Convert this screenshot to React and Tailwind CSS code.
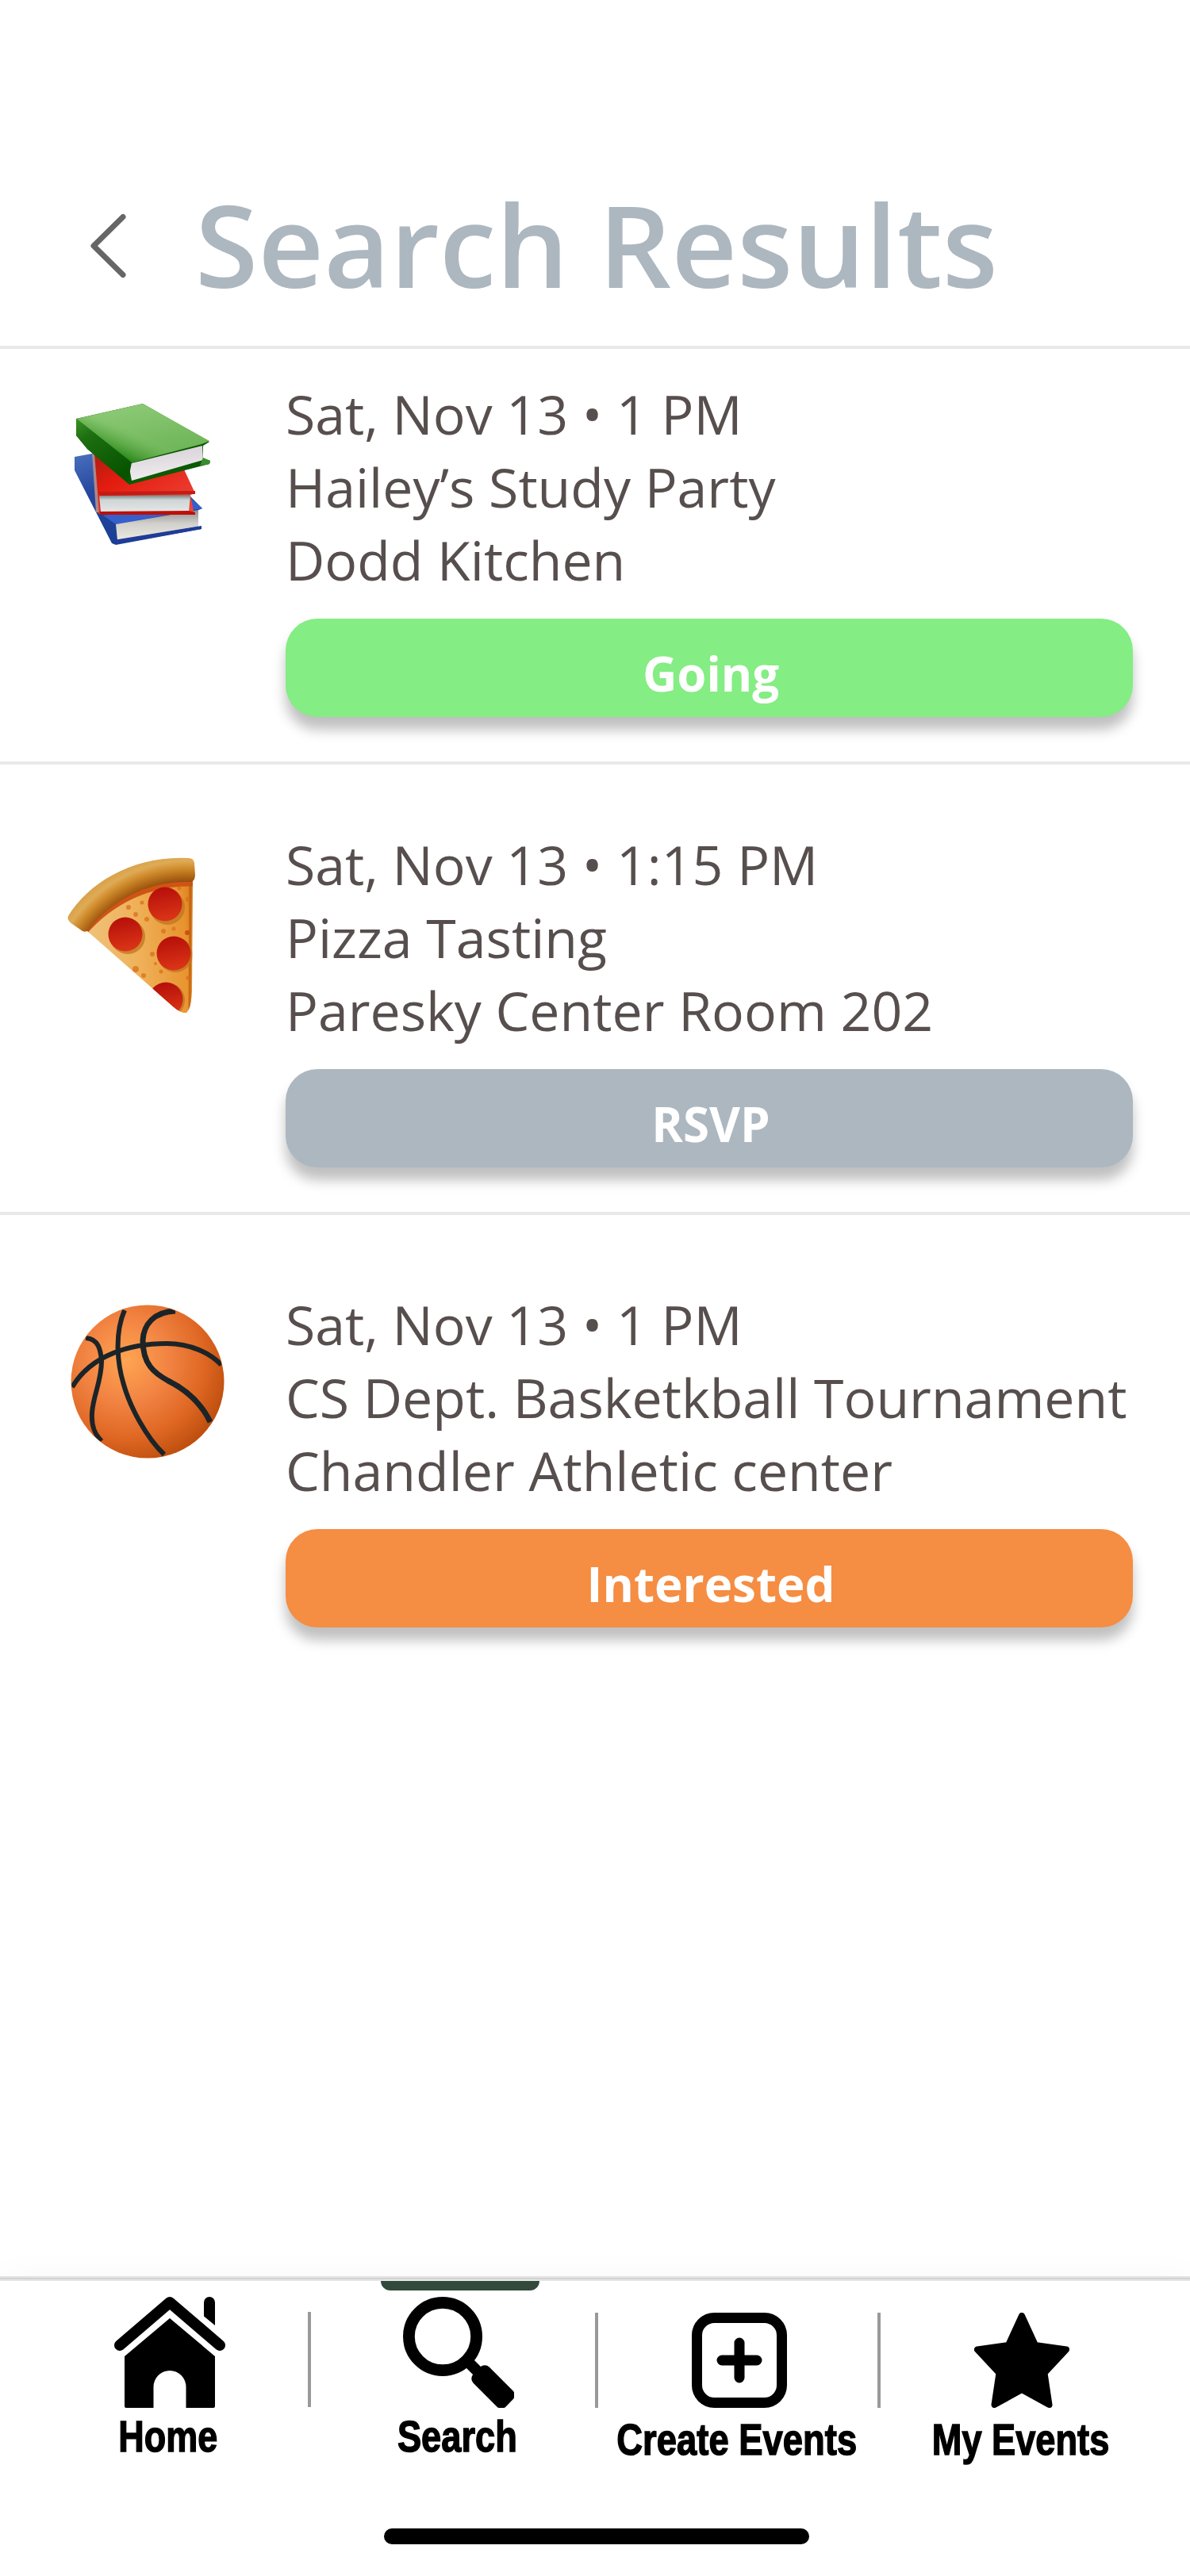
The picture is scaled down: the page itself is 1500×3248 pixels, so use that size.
const events = [
  {
    icon: 'books',
    when: 'Sat, Nov 13 • 1 PM',
    title: 'Hailey’s Study Party',
    place: 'Dodd Kitchen',
    status: 'Going',
    color: 'bg-[#84ed83]',
    row: 'h-[524px] pt-[36px]',
    divider: true,
  },
  {
    icon: 'pizza',
    when: 'Sat, Nov 13 • 1:15 PM',
    title: 'Pizza Tasting',
    place: 'Paresky Center Room 202',
    status: 'RSVP',
    color: 'bg-[#adb7bf]',
    row: 'h-[568px] pt-[80px]',
    divider: true,
  },
  {
    icon: 'ball',
    when: 'Sat, Nov 13 • 1 PM',
    title: 'CS Dept. Basketkball Tournament',
    place: 'Chandler Athletic center',
    status: 'Interested',
    color: 'bg-[#f58d42]',
    row: 'h-[568px] pt-[92px]',
    divider: false,
  },
];

function Books() {
  return (
    <svg viewBox="0 0 240 240" className="block size-[240px]">
      <defs>
        <linearGradient id="bkGreen" x1="0.2" y1="0" x2="0.7" y2="1">
          <stop offset="0" stopColor="#8fcc78" />
          <stop offset="1" stopColor="#69b153" />
        </linearGradient>
        <linearGradient id="bkSpine" x1="0" y1="0" x2="0.5" y2="1">
          <stop offset="0" stopColor="#3c9228" />
          <stop offset="0.3" stopColor="#1d6f10" />
          <stop offset="1" stopColor="#075400" />
        </linearGradient>
        <linearGradient id="bkTop" x1="0" y1="0.55" x2="0.35" y2="0.2">
          <stop offset="0" stopColor="#2c8a1c" />
          <stop offset="0.45" stopColor="#5faa48" stopOpacity="0.5" />
          <stop offset="0.8" stopColor="#8bc874" stopOpacity="0" />
        </linearGradient>
        <linearGradient id="bkRed" x1="0" y1="0" x2="1" y2="1">
          <stop offset="0" stopColor="#a81e14" />
          <stop offset="0.35" stopColor="#e31c0f" />
          <stop offset="1" stopColor="#ee4a3d" />
        </linearGradient>
        <linearGradient id="bkPage" x1="0" y1="0" x2="0.2" y2="1">
          <stop offset="0" stopColor="#d5ced6" />
          <stop offset="1" stopColor="#efedef" />
        </linearGradient>
        <linearGradient id="bkPage2" x1="0" y1="0" x2="0" y2="1">
          <stop offset="0" stopColor="#747c7c" />
          <stop offset="0.3" stopColor="#cfd4d4" />
          <stop offset="1" stopColor="#e2e6e6" />
        </linearGradient>
        <linearGradient id="bkPage3" x1="0" y1="0" x2="0" y2="1">
          <stop offset="0" stopColor="#8f8e8e" />
          <stop offset="0.45" stopColor="#d2d0cc" />
          <stop offset="1" stopColor="#ece9e1" />
        </linearGradient>
        <linearGradient id="bkBlue" x1="0" y1="0" x2="0.5" y2="1">
          <stop offset="0" stopColor="#4b70bf" />
          <stop offset="0.4" stopColor="#25469b" />
          <stop offset="1" stopColor="#193d94" />
        </linearGradient>
      </defs>
      <path d="M34 96 L56 92 L74 168 L180 146 L195 161 L188 164 L188 184 L194 187 L86 207 L81 205 L34 113 Z" fill="url(#bkBlue)" />
      <path d="M70 170 L180 148 L195 161 L86 181 Z" fill="#375fcc" />
      <path d="M86 181 L190 163 L190 184 L88 201 Z" fill="url(#bkPage3)" />
      <path d="M83 201 L194 183 L194 187 L86 206 Z" fill="#203c98" />
      <path d="M56 88 L172 112 L186 142 L180 144 L184 165 L186 168 L64 168 Z" fill="url(#bkRed)" />
      <path d="M56 91 L59 91 L65 166 L61 166 Z" fill="#a9888a" />
      <path d="M65 145 L180 144 L178 165 L67 165 Z" fill="url(#bkPage2)" />
      <path d="M64 140 L186 139 L186 143 L66 145 Z" fill="#c61b13" />
      <path d="M65 165 L178 164 L186 166 L186 169 L67 169 Z" fill="#bd0f08" />
      <path d="M36 48 L120 29 L204 77 L196 82 L196 98 L205 101 L204 105 L103 131 L50 86 L36 69 Z" fill="#0c5a04" />
      <path d="M102 105 L195 82 L196 100 L106 126 Z" fill="url(#bkPage)" />
      <path d="M196 97 L205 101 L204 105 L192 107 Z" fill="#3b8c2e" />
      <path d="M37 48 L120 29 L204 76 L194 80 L102 104 L42 62 Z" fill="url(#bkGreen)" />
      <path d="M37 48 L120 29 L204 76 L194 80 L102 104 L42 62 Z" fill="url(#bkTop)" />
      <path d="M36 48 L38 49 L106 103 L101 129 L50 86 L36 69 Z" fill="url(#bkSpine)" />
    </svg>
  );
}

function Pizza() {
  return (
    <svg viewBox="0 0 240 250" className="block h-[250px] w-[240px]">
      <defs>
        <linearGradient id="pzCheese" x1="0" y1="0.5" x2="1" y2="0.4">
          <stop offset="0" stopColor="#efc98a" />
          <stop offset="0.5" stopColor="#efb35c" />
          <stop offset="0.85" stopColor="#e8932f" />
          <stop offset="1" stopColor="#c9690f" />
        </linearGradient>
        <radialGradient id="pzCrust" gradientUnits="userSpaceOnUse" cx="178" cy="216" r="188">
          <stop offset="0.78" stopColor="#7d3305" />
          <stop offset="0.85" stopColor="#aa6214" />
          <stop offset="0.91" stopColor="#cf8a2b" />
          <stop offset="0.96" stopColor="#dfab55" />
          <stop offset="1" stopColor="#d9a34b" />
        </radialGradient>
        <linearGradient id="pzPep" x1="0.4" y1="0" x2="0.6" y2="1">
          <stop offset="0" stopColor="#b50f0a" />
          <stop offset="1" stopColor="#dc3618" />
        </linearGradient>
        <clipPath id="pzClip">
          <path d="M42 122 C75 84 130 58 183 60 L182 200 Q181 222 175 227 Q168 228 158 219 L133 197 L50 124 Z" />
        </clipPath>
      </defs>
      <g clipPath="url(#pzClip)">
        <rect x="20" y="40" width="180" height="200" fill="url(#pzCheese)" />
        <path d="M46 126 C80 86 130 62 184 64" fill="none" stroke="#cf5416" strokeWidth="7" />
        <path d="M180 60 L179 226" stroke="#b85a10" strokeWidth="3" opacity="0.7" />
        <g fill="#d9701d" opacity="0.75">
          <circle cx="102" cy="94" r="3" /><circle cx="111" cy="103" r="3" /><circle cx="125" cy="109" r="3" />
          <circle cx="119" cy="88" r="2.5" /><circle cx="146" cy="124" r="3" /><circle cx="159" cy="121" r="2.5" />
          <circle cx="176" cy="126" r="3" fill="#c33b10" /><circle cx="132" cy="153" r="3" /><circle cx="136" cy="165" r="2" />
          <circle cx="111" cy="172" r="4" /><circle cx="121" cy="180" r="3" /><circle cx="143" cy="175" r="2.5" />
          <circle cx="177" cy="84" r="3" /><circle cx="177" cy="183" r="2.5" /><circle cx="166" cy="70" r="2.5" />
        </g>
        <g fill="#c1741d" opacity="0.75">
          <circle cx="151" cy="94" r="22" /><circle cx="101" cy="131" r="22" />
          <circle cx="161" cy="154" r="22" /><circle cx="151" cy="211" r="22" />
        </g>
        <g fill="url(#pzPep)">
          <circle cx="148" cy="90" r="21.5" /><circle cx="98" cy="128" r="21.5" />
          <circle cx="159" cy="152" r="21.5" /><circle cx="149" cy="210" r="21.5" />
        </g>
      </g>
      <path d="M26 105 C52 62 110 28 178 32 Q184 32 185 38 L186 54 Q185 62 180 62 C126 60 80 86 52 122 Q49 126 44 124 L31 115 Q24 110 26 105 Z" fill="url(#pzCrust)" />
    </svg>
  );
}

function Ball() {
  return (
    <svg viewBox="0 0 250 240" className="block h-[240px] w-[250px]">
      <defs>
        <radialGradient id="blFill" cx="0.36" cy="0.36" r="0.68">
          <stop offset="0" stopColor="#ffa552" />
          <stop offset="0.4" stopColor="#f28443" />
          <stop offset="0.75" stopColor="#df6723" />
          <stop offset="1" stopColor="#c0500f" />
        </radialGradient>
        <clipPath id="blClip"><circle cx="126" cy="122" r="96" /></clipPath>
      </defs>
      <circle cx="126" cy="122" r="96.500" fill="url(#blFill)" />
      <g clipPath="url(#blClip)" fill="none" stroke="#1c2427" strokeWidth="6">
        <path d="M31 129 C55 88 105 74 150 74 C180 74 205 86 219 101" />
        <path d="M48 67 C64 68 67 82 68 96 C68 122 57 140 56 162 C55 178 59 188 68 197" />
        <path d="M97 32 C84 62 88 100 96 126 C104 154 124 192 147 214" />
        <path d="M161 33 C134 34 121 50 120 70 C120 100 134 111 152 121 C178 134 195 152 205 173" strokeWidth="7" />
      </g>
    </svg>
  );
}

function EventIcon({ name }) {
  if (name === 'books') return <div className="mt-[4px] ml-[60px]"><Books /></div>;
  if (name === 'pizza') return <div className="mt-[6px] ml-[60px]"><Pizza /></div>;
  return <div className="-mt-[4px] ml-[60px]"><Ball /></div>;
}

function EventRow({ event }) {
  return (
    <section className={`flex items-start ${event.row} ${event.divider ? 'border-b-4 border-[#e9e9e9]' : ''}`}>
      <div className="w-[360px] shrink-0">
        <EventIcon name={event.icon} />
      </div>
      <div className="w-[1068px] shrink-0">
        <div className="text-[68px] leading-[92px] whitespace-nowrap text-[#574f4d]">
          <p>{event.when}</p>
          <p>{event.title}</p>
          <p>{event.place}</p>
        </div>
        <button
          className={`mt-[28px] flex h-[124px] w-full justify-center rounded-[40px] pt-[28px] pl-[4px] text-[60px] leading-[82px] font-bold text-white shadow-[0_16px_16px_rgba(0,0,0,0.25)] ${event.color}`}
        >
          {event.status}
        </button>
      </div>
    </section>
  );
}

function HomeIcon() {
  return (
    <svg viewBox="0 0 140 140" className="block size-[140px]">
      <path d="M7 61 L70 7 L133 61" fill="none" stroke="#000" strokeWidth="14" strokeLinecap="round" strokeLinejoin="round" />
      <path d="M113 24.500 V7 a7 7 0 0 1 14 0 V36 Z" />
      <path d="M70 27 L127 75 V138 q0 2 -2 2 H90.500 V113.500 a20.500 20.500 0 0 0 -41 0 V140 H15 q-2 0 -2 -2 V75 Z" />
    </svg>
  );
}

function SearchIcon() {
  return (
    <svg viewBox="0 0 140 140" className="block size-[140px]">
      <circle cx="50" cy="50" r="42.600" fill="none" stroke="#000" strokeWidth="14.800" />
      <path d="M78 78 L98 98" stroke="#000" strokeWidth="14" />
      <rect x="84.500" y="99.300" width="58" height="28.400" rx="8" transform="rotate(45 113.500 113.500)" />
    </svg>
  );
}

function PlusIcon() {
  return (
    <svg viewBox="0 0 120 120" className="block size-[120px]">
      <rect x="6.500" y="6.500" width="107" height="107" rx="22" fill="none" stroke="#000" strokeWidth="13" />
      <path d="M60 38 V82 M38 60 H82" stroke="#000" strokeWidth="13" strokeLinecap="round" />
    </svg>
  );
}

function StarIcon() {
  return (
    <svg viewBox="0 0 120 120" className="block size-[120px]">
      <path d="M60 4 L77 41 L116 46.500 L88.500 76 L94.500 116 L60 97 L25.500 116 L31.500 76 L4 46.500 L43 41 Z" stroke="#000" strokeWidth="8" strokeLinejoin="round" />
    </svg>
  );
}

function NavItem({ label, box, text, children }) {
  return (
    <div className={`flex shrink-0 flex-col items-center ${box}`}>
      {children}
      <span className={`inline-block text-[56px] leading-[64px] font-bold whitespace-nowrap [font-family:'Liberation_Sans',Arial,sans-serif] [-webkit-text-stroke:1.5px_#000] ${text}`}>
        {label}
      </span>
    </div>
  );
}

function Separator({ className }) {
  return <div className={`h-[120px] w-1 shrink-0 bg-[#999] ${className}`} />;
}

export default function App() {
  return (
    <div className="flex h-[3248px] w-[1500px] flex-col overflow-hidden bg-white [font-family:'Open_Sans','Noto_Sans',sans-serif]">
      <header className="flex h-[440px] shrink-0 border-b-4 border-[#e9e9e9]">
        <svg viewBox="0 0 50 90" className="mt-[267px] ml-[112px] h-[90px] w-[50px] shrink-0">
          <path d="M43 6.500 L6 43 L43 79.500" fill="none" stroke="#666" strokeWidth="7" strokeLinecap="round" strokeLinejoin="round" />
        </svg>
        <h1 className="mt-[209px] ml-[84px] text-[144px] leading-[196px] font-semibold whitespace-nowrap text-[#adb7bf]">Search Results</h1>
      </header>

      <main className="flex-1">
        {events.map((event) => (
          <EventRow key={event.icon} event={event} />
        ))}
      </main>

      <nav className="flex h-[378px] shrink-0 flex-col bg-white shadow-[0_-2px_40px_rgba(0,0,0,0.03)]">
        <div className="h-[2px] bg-[#e3e3e3]" />
        <div className="h-[2px] bg-[#d4d4d4]" />
        <div className="h-[2px] bg-[#e6e6e6]" />
        <div className="relative flex h-[312px]">
          <div className="absolute top-0 left-[480px] h-3 w-[200px] rounded-b-[16px] bg-[#32493b]" />
          <NavItem label="Home" box="w-[388px] pl-[40px] pt-[20px]" text="mt-[4px] -translate-x-[2px] scale-x-[0.803]">
            <HomeIcon />
          </NavItem>
          <Separator className="mt-[39px]" />
          <NavItem label="Search" box="w-[358px] pl-[14px] pt-[20px]" text="mt-[4px] -translate-x-[2px] scale-x-[0.808]">
            <SearchIcon />
          </NavItem>
          <Separator className="mt-[40px]" />
          <NavItem label="Create Events" box="w-[352px] pl-[4px] pt-[40px]" text="mt-[8px] -translate-x-[3px] scale-x-[0.811]">
            <PlusIcon />
          </NavItem>
          <Separator className="mt-[40px]" />
          <NavItem label="My Events" box="w-[356px] pt-[40px]" text="mt-[8px] -translate-x-[2px] scale-x-[0.807]">
            <StarIcon />
          </NavItem>
        </div>
        <div className="ml-[484px] h-[20px] w-[536px] rounded-full bg-black" />
      </nav>
    </div>
  );
}
